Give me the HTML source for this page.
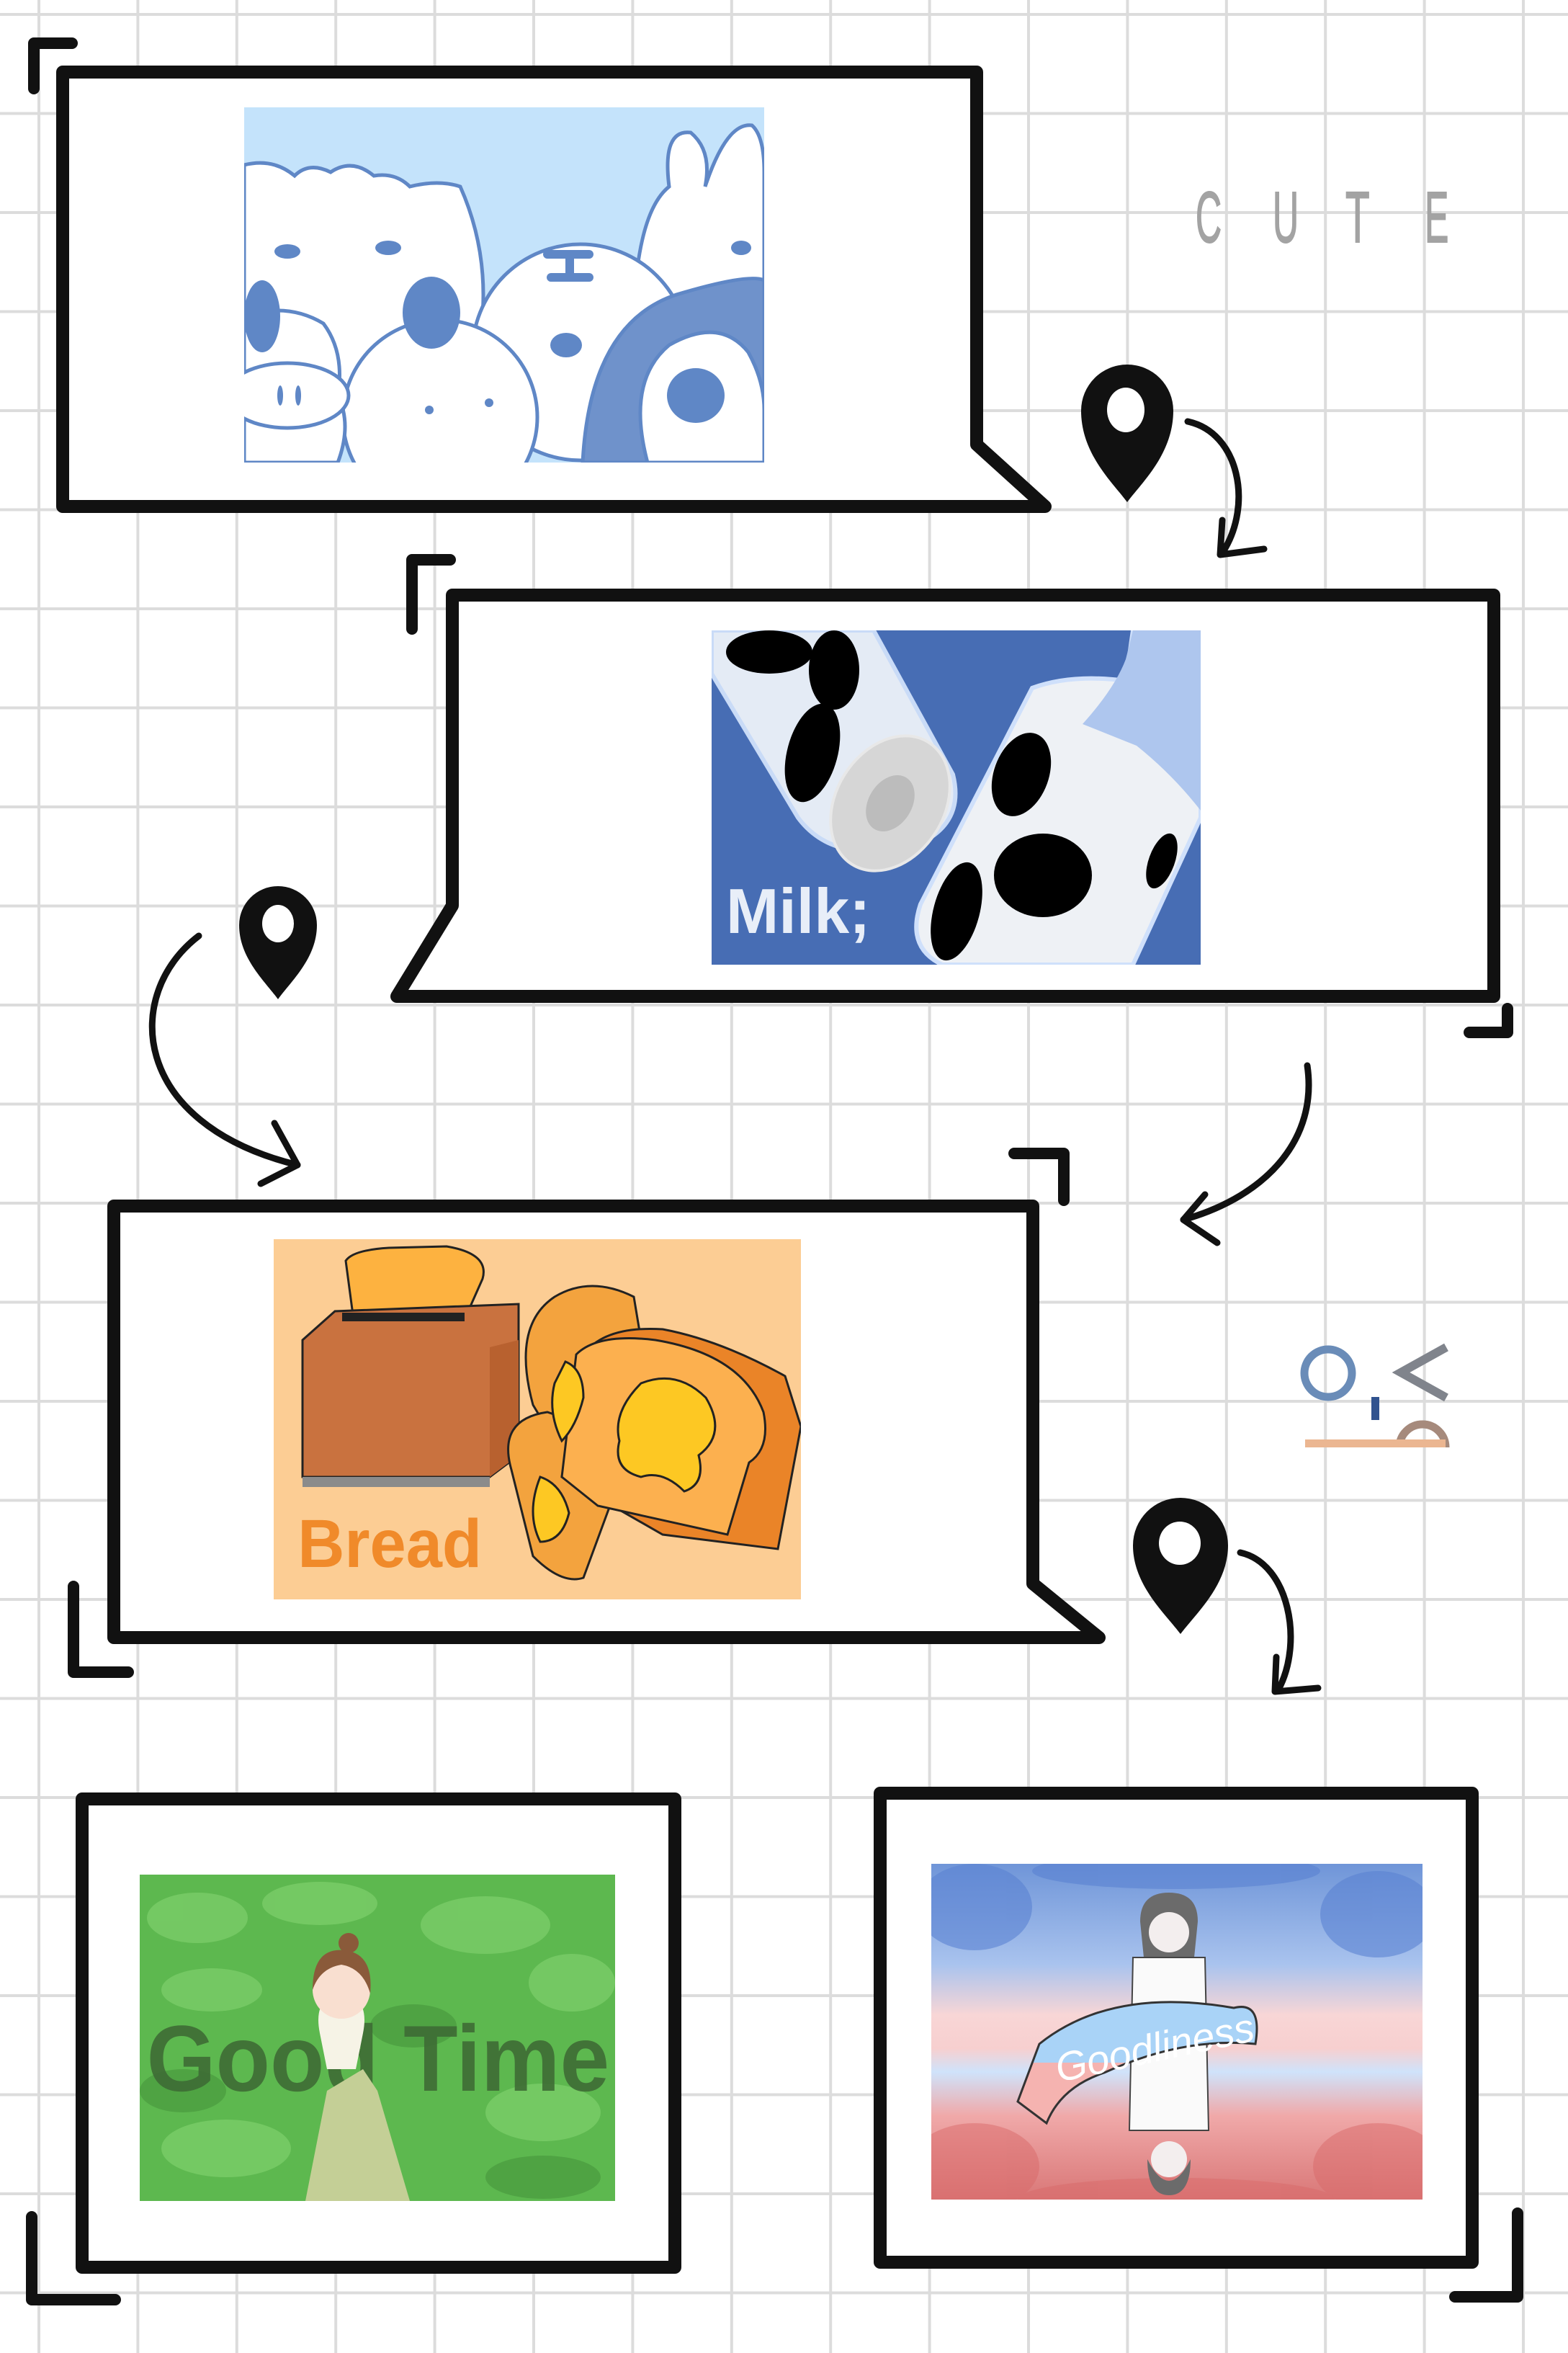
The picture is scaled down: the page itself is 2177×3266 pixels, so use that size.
<!DOCTYPE html>
<html><head><meta charset="utf-8"><style>
html,body{margin:0;padding:0;background:#fff;}
svg{display:block;}
</style></head><body>
<svg width="2177" height="3266" viewBox="0 0 2177 3266" xmlns="http://www.w3.org/2000/svg">
<defs>
<pattern id="grid" x="52" y="18" width="137.4" height="137.5" patternUnits="userSpaceOnUse">
<rect x="0" y="0" width="4" height="137.5" fill="#dcdcdc"/>
<rect x="0" y="0" width="137.4" height="4" fill="#dcdcdc"/>
</pattern>
<linearGradient id="g5" x1="0" y1="0" x2="0" y2="1">
<stop offset="0" stop-color="#6f95d8"/><stop offset="0.3" stop-color="#a9c3ee"/>
<stop offset="0.45" stop-color="#f8d6d6"/><stop offset="0.55" stop-color="#f7cfcf"/>
<stop offset="0.62" stop-color="#cfe3fb"/><stop offset="0.75" stop-color="#f0a9a9"/>
<stop offset="1" stop-color="#d97777"/></linearGradient>
<linearGradient id="ban" x1="0" y1="0" x2="0" y2="1"><stop offset="0" stop-color="#a9d3f7"/><stop offset="0.5" stop-color="#a9d3f7"/><stop offset="0.5" stop-color="#f5b3b0"/><stop offset="1" stop-color="#f5b3b0"/></linearGradient>
</defs>
<rect width="2177" height="3266" fill="#fff"/>
<rect width="2177" height="3266" fill="url(#grid)"/>

<g fill="#fff" stroke="#111" stroke-width="18" stroke-linejoin="round">
<path d="M87 100 L1356 100 L1356 617 L1451 703 L87 703 Z"/>
<path d="M628 826 L2074 826 L2074 1383 L551 1383 L628 1257 Z"/>
<path d="M158 1674 L1434 1674 L1434 2198 L1526 2273 L158 2273 Z"/>
<rect x="114" y="2497" width="823" height="650"/>
<rect x="1222" y="2489" width="822" height="651"/>
</g>
<g fill="none" stroke="#111" stroke-width="16" stroke-linecap="round" stroke-linejoin="round">
<path d="M100 60 L47 60 L47 123"/>
<path d="M625 777 L572 777 L572 873"/>
<path d="M1408 1601 L1477 1601 L1477 1666"/>
<path d="M2093 1400 L2093 1433 L2040 1433"/>
<path d="M102 2202 L102 2321 L178 2321"/>
<path d="M44 3077 L44 3192 L160 3192"/>
<path d="M2107 3072 L2107 3188 L2020 3188"/>
</g>
<g fill="none" stroke="#111" stroke-width="9" stroke-linecap="round" stroke-linejoin="round">
<path d="M1649 585 C1720 600 1740 700 1698 766"/><path d="M1697 722 L1694 770 L1755 762"/>
<path d="M276 1299 C170 1380 180 1560 413 1617"/><path d="M381 1559 L413 1617 L362 1643"/>
<path d="M1815 1479 C1830 1580 1760 1660 1643 1693"/><path d="M1673 1658 L1643 1693 L1690 1725"/>
<path d="M1722 2155 C1790 2170 1810 2280 1775 2345"/><path d="M1772 2300 L1770 2348 L1830 2343"/>
</g>
<g fill="#111">
<path d="M1501 570 C1501 630 1545 670 1565 697 C1585 670 1629 630 1629 570 A64 64 0 0 0 1501 570 Z"/>
<path d="M332 1284 C332 1330 368 1362 386 1387 C404 1362 440 1330 440 1284 A54 54 0 0 0 332 1284 Z"/>
<path d="M1573 2145 C1573 2200 1618 2240 1639 2268 C1660 2240 1705 2200 1705 2145 A66 66 0 0 0 1573 2145 Z"/>
</g>
<g fill="#fff">
<ellipse cx="1563" cy="569" rx="26" ry="31"/>
<ellipse cx="386" cy="1282" rx="22" ry="26"/>
<ellipse cx="1638" cy="2142" rx="29" ry="30"/>
</g>

<g fill="#a3a3a3" font-family="Liberation Sans, sans-serif" font-size="100" stroke="#a3a3a3" stroke-width="2">
<text transform="translate(1660 336) scale(0.5 1)">C</text>
<text transform="translate(1767 336) scale(0.5 1)">U</text>
<text transform="translate(1868 336) scale(0.55 1)">T</text>
<text transform="translate(1978 336) scale(0.5 1)">E</text>
</g>

<circle cx="1844" cy="1906" r="33" fill="none" stroke="#6a8cb8" stroke-width="11"/>
<rect x="1904" y="1939" width="11" height="32" fill="#31538f"/>
<path d="M2008 1870 L1945 1905 L2008 1940" fill="none" stroke="#80848c" stroke-width="12"/>
<path d="M1943 2009 A32 32 0 0 1 2007 2009" fill="none" stroke="#a68a7c" stroke-width="11"/>
<rect x="1812" y="1998" width="195" height="11" fill="#ebb691"/>

<svg x="339" y="149" width="722" height="493" viewBox="0 0 722 493">
<rect width="722" height="493" fill="#c4e3fb"/>
<g fill="#fff" stroke="#5f87c6" stroke-width="5">
<path d="M0 80 Q40 70 70 95 Q90 75 120 90 Q150 70 180 95 Q210 90 230 110 Q270 100 300 110 Q340 200 330 300 Q300 400 180 420 Q40 420 0 380 Z"/>
<path d="M590 110 Q580 30 620 35 Q650 60 640 110 Q670 20 705 25 Q722 40 722 90 L722 330 L540 330 Q540 150 590 110Z"/>
<circle cx="467" cy="340" r="150"/>
<path d="M470 493 Q480 300 600 260 Q700 230 722 240 L722 493Z" fill="#6f92cb"/>
<path d="M560 493 Q530 380 590 330 Q660 290 700 340 Q722 380 722 420 L722 493Z"/>
<circle cx="272" cy="430" r="135"/>
<path d="M0 290 Q60 270 110 300 Q140 340 130 400 Q150 440 130 493 L0 493Z"/>
<ellipse cx="60" cy="400" rx="85" ry="45"/>
</g>
<g fill="#5f87c6">
<ellipse cx="25" cy="290" rx="25" ry="50"/>
<ellipse cx="260" cy="285" rx="40" ry="50"/>
<ellipse cx="60" cy="200" rx="18" ry="10"/><ellipse cx="200" cy="195" rx="18" ry="10"/>
<rect x="415" y="198" width="70" height="12" rx="6"/><rect x="420" y="230" width="65" height="12" rx="6"/><rect x="446" y="200" width="12" height="40"/>
<ellipse cx="447" cy="330" rx="22" ry="17"/>
<ellipse cx="627" cy="400" rx="40" ry="38"/>
<ellipse cx="50" cy="400" rx="4" ry="14"/><ellipse cx="75" cy="400" rx="4" ry="14"/>
<circle cx="257" cy="420" r="6"/><circle cx="340" cy="410" r="6"/>
<ellipse cx="690" cy="195" rx="14" ry="10"/>
</g>
</svg>

<svg x="988" y="875" width="679" height="464" viewBox="0 0 679 464">
<rect width="679" height="464" fill="#476db4"/>
<path d="M0 0 L225 0 L335 200 Q350 260 300 290 L200 305 Q150 300 120 260 L0 60Z" fill="#e4ebf5" stroke="#c9dbf7" stroke-width="6"/>
<ellipse cx="248" cy="240" rx="100" ry="75" transform="rotate(-58 248 240)" fill="#d6d6d6" stroke="#e8e8e8" stroke-width="4"/>
<ellipse cx="248" cy="240" rx="42" ry="30" transform="rotate(-58 248 240)" fill="#bcbcbc"/>
<path d="M585 0 L679 0 L679 260 L585 464 L320 464 Q270 440 290 380 L445 80 Q500 60 575 70Z" fill="#eef1f5" stroke="#cfe0fb" stroke-width="6"/>
<path d="M585 0 L679 0 L679 250 Q640 200 590 160 L515 130 Q560 80 575 40Z" fill="#aec6ee"/>
<g fill="#000">
<ellipse cx="80" cy="30" rx="60" ry="30"/>
<ellipse cx="170" cy="55" rx="35" ry="55"/>
<ellipse cx="140" cy="170" rx="35" ry="70" transform="rotate(15 140 170)"/>
<ellipse cx="430" cy="200" rx="38" ry="60" transform="rotate(20 430 200)"/>
<ellipse cx="460" cy="340" rx="68" ry="58"/>
<ellipse cx="340" cy="390" rx="32" ry="70" transform="rotate(15 340 390)"/>
<ellipse cx="625" cy="320" rx="18" ry="40" transform="rotate(20 625 320)"/>
</g>
<text x="20" y="420" fill="#e8eef8" font-family="Liberation Sans, sans-serif" font-weight="bold" font-size="88">Milk;</text>
</svg>

<svg x="380" y="1720" width="732" height="500" viewBox="0 0 732 500">
<rect width="732" height="500" fill="#fccd94"/>
<path d="M100 30 Q110 15 160 12 L240 10 Q300 20 290 55 L270 100 L110 105 Z" fill="#fdb240" stroke="#222" stroke-width="3"/>
<path d="M40 140 L85 100 L340 90 L340 300 L300 330 L40 330Z" fill="#c9723f" stroke="#222" stroke-width="3"/>
<rect x="40" y="330" width="260" height="14" fill="#8b8b8b"/>
<rect x="95" y="102" width="170" height="12" fill="#222"/>
<path d="M300 330 L340 300 L340 140 L300 150Z" fill="#b8612f"/>
<g stroke="#222" stroke-width="3">
<path d="M360 230 Q330 120 390 80 Q440 50 500 80 L510 140 L420 330Z" fill="#f3a33e"/>
<path d="M330 320 Q310 250 380 240 L500 280 L430 470 Q400 480 360 440Z" fill="#f3a33e"/>
<path d="M430 160 Q460 120 540 125 Q620 140 710 190 L732 260 L700 430 L540 410 L400 330Z" fill="#ea8428"/>
<path d="M420 160 Q450 130 530 140 Q650 160 680 240 Q690 290 660 310 L630 410 L450 370 L400 330Z" fill="#fcb04f"/>
<path d="M510 200 Q560 180 600 220 Q630 270 590 300 Q600 340 570 350 Q540 320 510 330 Q470 320 480 280 Q470 240 510 200Z" fill="#fdc823"/>
<path d="M405 170 Q430 180 430 220 Q420 260 400 280 Q380 240 390 200Z" fill="#fdc823"/>
<path d="M370 330 Q400 340 410 380 Q400 420 370 420 Q350 380 370 330Z" fill="#fdc823"/>
</g>
<text x="35" y="455" fill="#f08a2a" font-family="Liberation Sans, sans-serif" font-weight="bold" font-size="95" transform="scale(0.95 1)">Bread</text>
</svg>

<svg x="194" y="2602" width="660" height="453" viewBox="0 0 660 453">
<rect width="660" height="453" fill="#5db84f"/>
<g fill="#7fd06c" opacity="0.7">
<ellipse cx="80" cy="60" rx="70" ry="35"/><ellipse cx="250" cy="40" rx="80" ry="30"/><ellipse cx="480" cy="70" rx="90" ry="40"/><ellipse cx="600" cy="150" rx="60" ry="40"/><ellipse cx="100" cy="160" rx="70" ry="30"/><ellipse cx="560" cy="330" rx="80" ry="40"/><ellipse cx="120" cy="380" rx="90" ry="40"/>
</g>
<g fill="#4a9a3f" opacity="0.7">
<ellipse cx="60" cy="300" rx="60" ry="30"/><ellipse cx="560" cy="420" rx="80" ry="30"/><ellipse cx="380" cy="210" rx="60" ry="30"/>
</g>
<text x="10" y="300" fill="#3e6c35" font-family="Liberation Sans, sans-serif" font-weight="bold" font-size="130" transform="scale(0.95 1)" opacity="0.9">Good Time</text>
<path d="M230 453 L260 300 L310 270 L330 300 L375 453Z" fill="#c4cf96"/>
<path d="M250 220 Q240 170 280 165 Q320 170 310 220 L300 270 L260 270Z" fill="#f6f3e6"/>
<circle cx="280" cy="160" r="40" fill="#f9dfd0"/>
<path d="M240 160 Q240 100 285 105 Q325 110 320 165 Q310 130 280 125 Q250 130 240 160Z" fill="#8a5a3a"/>
<circle cx="290" cy="95" r="14" fill="#8a5a3a"/>
</svg>

<svg x="1293" y="2587" width="682" height="466" viewBox="0 0 682 466">
<rect width="682" height="466" fill="url(#g5)"/>
<g fill="#5a82d2" opacity="0.6"><ellipse cx="60" cy="60" rx="80" ry="60"/><ellipse cx="620" cy="70" rx="80" ry="60"/><ellipse cx="340" cy="10" rx="200" ry="25"/></g>
<g fill="#d96a6a" opacity="0.5"><ellipse cx="60" cy="420" rx="90" ry="60"/><ellipse cx="620" cy="420" rx="90" ry="60"/><ellipse cx="340" cy="466" rx="220" ry="30"/></g>
<path d="M290 80 Q290 40 330 40 Q370 40 370 80 L365 130 L295 130Z" fill="#6b6b6b"/>
<circle cx="330" cy="95" r="28" fill="#f3eeee"/>
<path d="M280 130 L380 130 L385 370 L275 370Z" fill="#fafafa" stroke="#444" stroke-width="2"/>
<path d="M150 250 Q250 170 420 200 Q460 190 450 250 Q350 240 240 290 Q180 310 160 360 L120 330Z" fill="url(#ban)" stroke="#333" stroke-width="3"/>
<text x="170" y="285" fill="#fff" font-family="Liberation Sans, sans-serif" font-style="italic" font-size="56" transform="rotate(-12 260 260)">Goodliness</text>
<circle cx="330" cy="410" r="25" fill="#f3eeee"/>
<path d="M300 410 Q300 460 330 460 Q360 460 360 410 Q345 440 330 440 Q315 440 300 410Z" fill="#6b6b6b"/>
</svg>
</svg>
</body></html>
